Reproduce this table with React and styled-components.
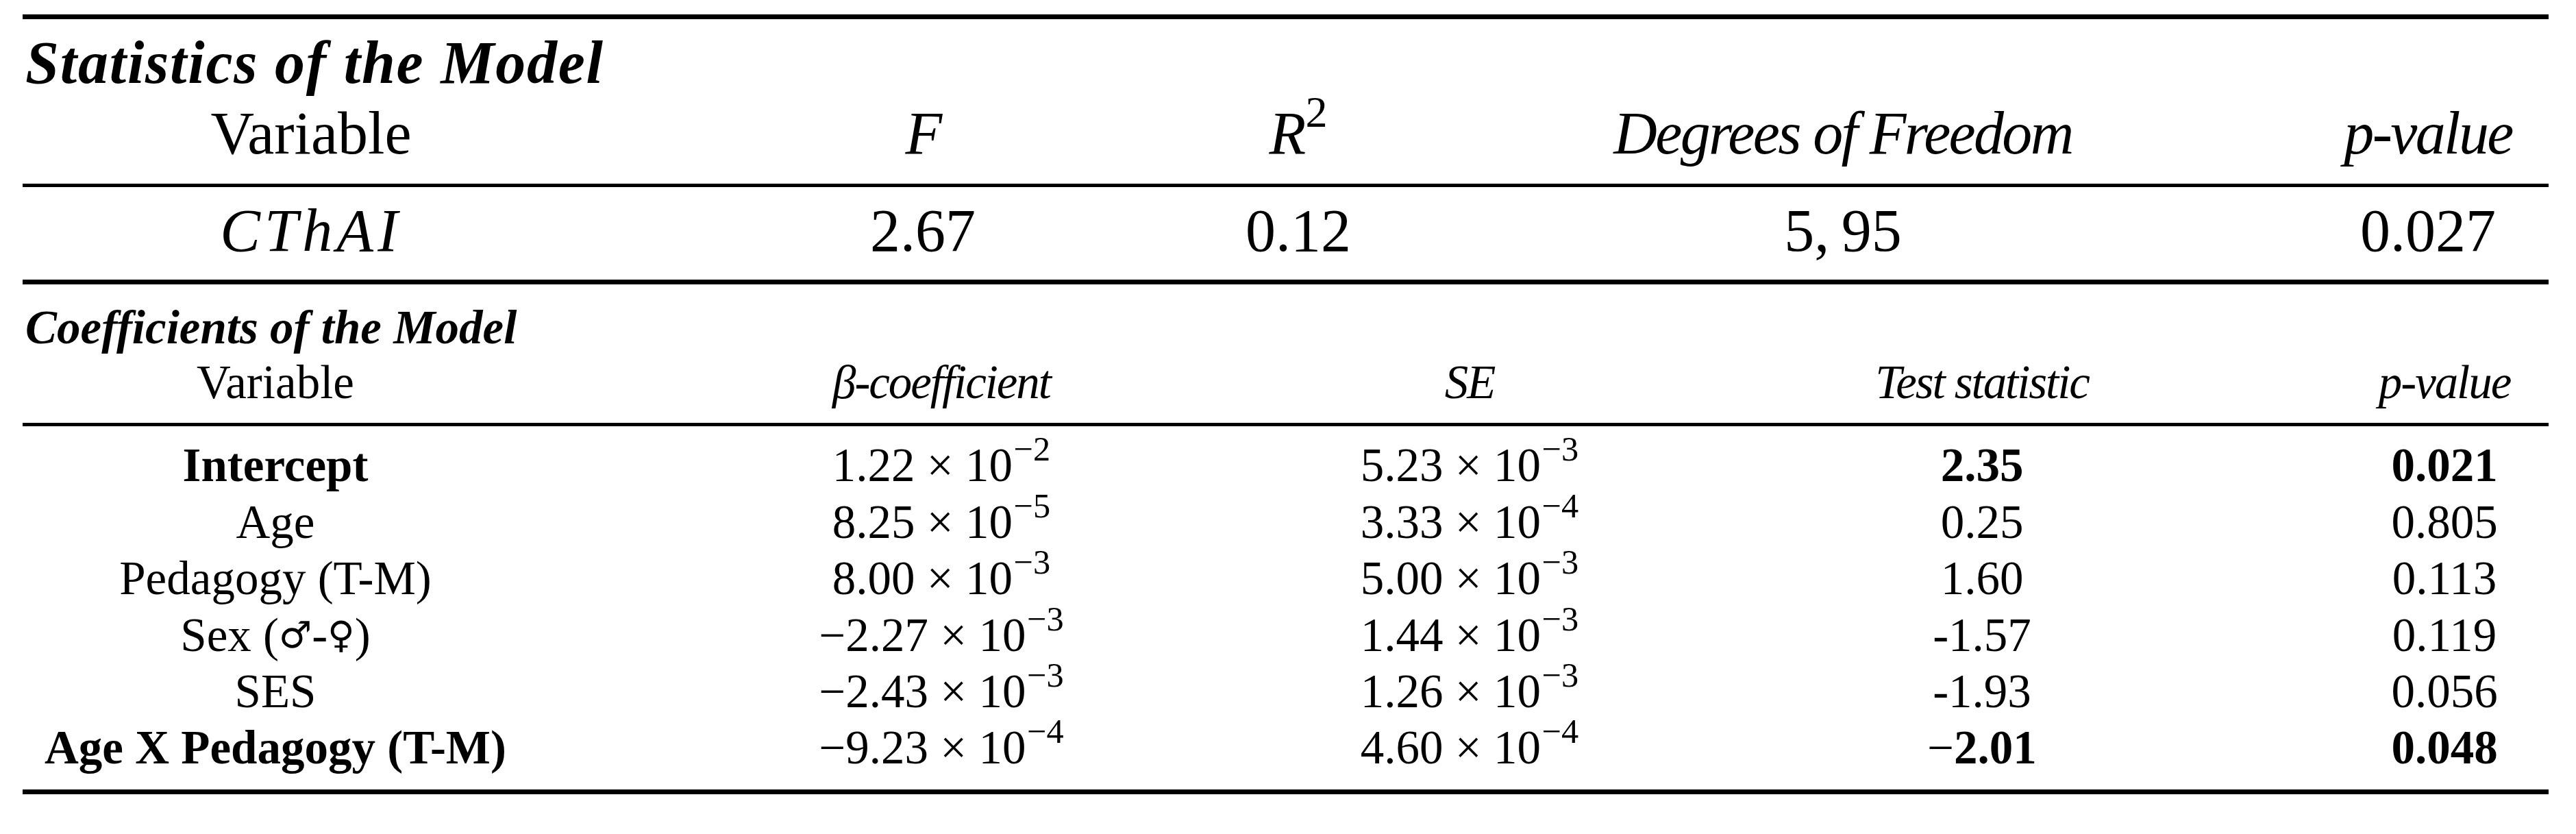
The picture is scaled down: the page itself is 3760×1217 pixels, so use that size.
import React from "react";
import styled, { createGlobalStyle } from "styled-components";

const GlobalStyle = createGlobalStyle`
  html, body { margin: 0; padding: 0; background: #ffffff; }
  body {
    font-family: "Liberation Serif", "DejaVu Serif", serif;
    color: #000000;
  }
`;

const Page = styled.main`
  box-sizing: border-box;
  width: 3760px;
  height: 1217px;
  padding: 21px 40px 0 33px;
  background: #ffffff;
`;

const Rule = styled.div`
  height: ${(p) => p.$weight}px;
  background: #000000;
`;

const Table = styled.section`
  font-size: ${(p) => p.$fs}px;
`;

const TitleRow = styled.div`
  padding: ${(p) => p.$pt}px 0 0 4px;
  line-height: ${(p) => p.$lh}px;
  font-style: italic;
  font-weight: 700;
  letter-spacing: ${(p) => p.$ls || 0}em;
  white-space: nowrap;
`;

const GridRow = styled.div`
  display: grid;
  grid-template-columns: ${(p) => p.$cols};
  line-height: ${(p) => p.$lh}px;
  padding: ${(p) => p.$pt || 0}px 0 ${(p) => p.$pb || 0}px;
`;

const Body = styled.div`
  padding: ${(p) => p.$pt}px 0 ${(p) => p.$pb}px;
`;

const Cell = styled.div`
  display: flex;
  justify-content: center;
  white-space: nowrap;
  font-weight: ${(p) => (p.$bold ? 700 : 400)};
`;

const HeadCell = styled(Cell)`
  font-style: italic;
  letter-spacing: -0.03em;
`;

const MathVar = styled.span`
  font-style: italic;
  letter-spacing: ${(p) => (p.$spread ? "0.07em" : "0")};
`;

const Sup = styled.span`
  position: relative;
  top: -0.48em;
  margin-left: 0.03em;
  font-size: 0.73em;
  font-style: normal;
  font-weight: 400;
  vertical-align: baseline;
  letter-spacing: 0;
`;

const Light = styled.span`
  font-weight: 400;
`;

const Symbol = styled.span`
  font-family: "DejaVu Sans", sans-serif;
  font-size: 0.78em;
  font-weight: 400;
`;

const T1_COLS = "842px 944px 152px 1438px 270px 1fr";
const T2_COLS = "738px 1206px 336px 1160px 190px 1fr";

const Sci = ({ m, e }) => (
  <>
    {m} × 10<Sup>−{e}</Sup>
  </>
);

const rows = [
  {
    name: "Intercept",
    bold: true,
    beta: ["1.22", "2"],
    se: ["5.23", "3"],
    stat: "2.35",
    p: "0.021",
  },
  { name: "Age", beta: ["8.25", "5"], se: ["3.33", "4"], stat: "0.25", p: "0.805" },
  {
    name: "Pedagogy (T-M)",
    beta: ["8.00", "3"],
    se: ["5.00", "3"],
    stat: "1.60",
    p: "0.113",
  },
  {
    name: (
      <>
        Sex (<Symbol>♂</Symbol>-<Symbol>♀</Symbol>)
      </>
    ),
    beta: ["−2.27", "3"],
    se: ["1.44", "3"],
    stat: "-1.57",
    p: "0.119",
  },
  { name: "SES", beta: ["−2.43", "3"], se: ["1.26", "3"], stat: "-1.93", p: "0.056" },
  {
    name: "Age X Pedagogy (T-M)",
    bold: true,
    beta: ["−9.23", "4"],
    se: ["4.60", "4"],
    stat: (
      <>
        <Light>−</Light>2.01
      </>
    ),
    p: "0.048",
  },
];

export default function App() {
  return (
    <>
      <GlobalStyle />
      <Page>
        <Rule $weight={7} />
        <Table $fs={88}>
          <TitleRow $pt={15.9} $lh={96.8} $ls={0.02}>
            Statistics of the Model
          </TitleRow>
          <GridRow $cols={T1_COLS} $lh={96.8} $pt={6.2} $pb={24.3}>
            <Cell>Variable</Cell>
            <HeadCell>F</HeadCell>
            <HeadCell>
              R<Sup>2</Sup>
            </HeadCell>
            <HeadCell>Degrees of Freedom</HeadCell>
            <HeadCell>p-value</HeadCell>
          </GridRow>
          <Rule $weight={5} />
          <GridRow $cols={T1_COLS} $lh={96.8} $pt={15.9} $pb={22.3}>
            <Cell>
              <MathVar $spread>CThAI</MathVar>
            </Cell>
            <Cell>2.67</Cell>
            <Cell>0.12</Cell>
            <Cell>5,&#8201;95</Cell>
            <Cell>0.027</Cell>
          </GridRow>
        </Table>
        <Rule $weight={7} />
        <Table $fs={69}>
          <TitleRow $pt={25.8} $lh={75.9}>
            Coefficients of the Model
          </TitleRow>
          <GridRow $cols={T2_COLS} $lh={75.9} $pt={4.1} $pb={20.3}>
            <Cell>Variable</Cell>
            <HeadCell>β-coefficient</HeadCell>
            <HeadCell>SE</HeadCell>
            <HeadCell>Test statistic</HeadCell>
            <HeadCell>p-value</HeadCell>
          </GridRow>
          <Rule $weight={5} />
          <Body $pt={16.5} $pb={19.1}>
            {rows.map((r, i) => (
              <GridRow key={i} $cols={T2_COLS} $lh={82.4}>
                <Cell $bold={r.bold}>{r.name}</Cell>
                <Cell>
                  <Sci m={r.beta[0]} e={r.beta[1]} />
                </Cell>
                <Cell>
                  <Sci m={r.se[0]} e={r.se[1]} />
                </Cell>
                <Cell $bold={r.bold}>{r.stat}</Cell>
                <Cell $bold={r.bold}>{r.p}</Cell>
              </GridRow>
            ))}
          </Body>
        </Table>
        <Rule $weight={7} />
      </Page>
    </>
  );
}
